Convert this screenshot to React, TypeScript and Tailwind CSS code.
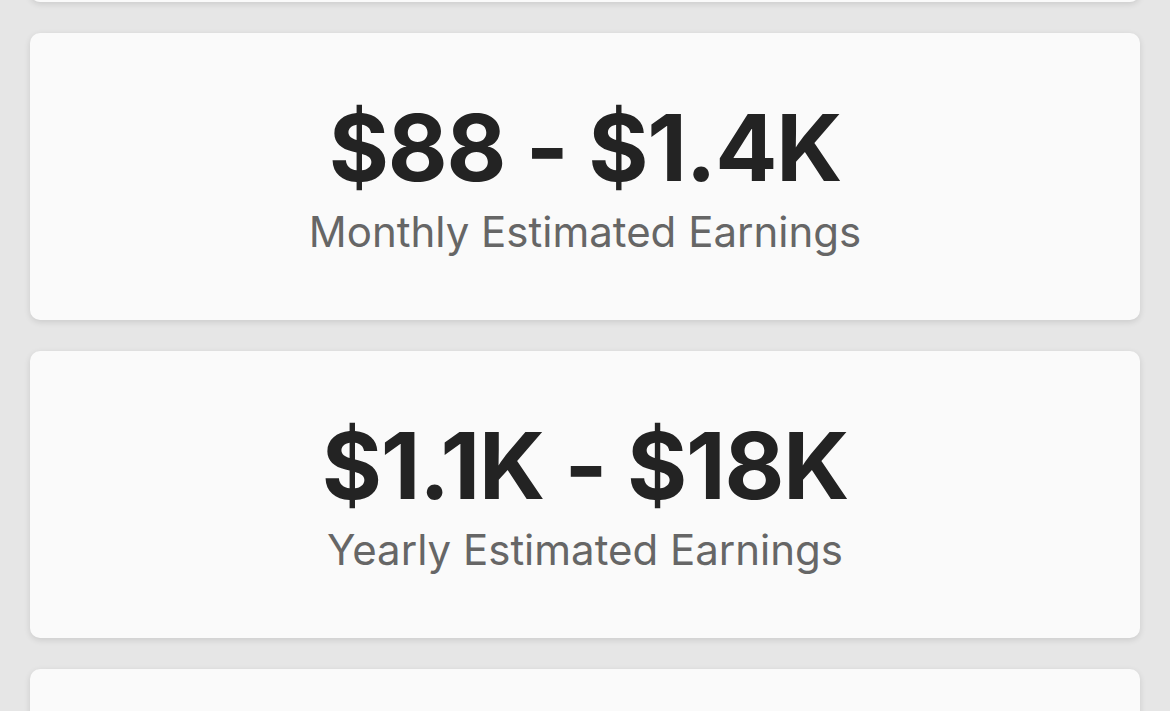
import React from "react";

function Card({ value, label }: { value?: string; label?: string }) {
  return (
    <div className="h-[287px] shrink-0 rounded-[10px] bg-[#fafafa] shadow-[0_2px_6px_rgba(0,0,0,0.12)] flex flex-col items-center pt-[69px]">
      {value && (
        <>
          <div className="text-[92px] font-bold leading-none text-[#232323] tracking-[-1.2px]">{value}</div>
          <div className="text-[42px] leading-none text-[#666666] mt-[17px]">{label}</div>
        </>
      )}
    </div>
  );
}

export default function App() {
  return (
    <div
      className="w-[1170px] h-[711px] overflow-hidden bg-[#e6e6e6] px-[30px] flex flex-col gap-[31px]"
      style={{ fontFamily: "Inter, 'Noto Sans', sans-serif" }}
    >
      <div className="mt-[-285px]">
        <Card />
      </div>
      <Card value="$88 - $1.4K" label="Monthly Estimated Earnings" />
      <Card value="$1.1K - $18K" label="Yearly Estimated Earnings" />
      <Card />
    </div>
  );
}
